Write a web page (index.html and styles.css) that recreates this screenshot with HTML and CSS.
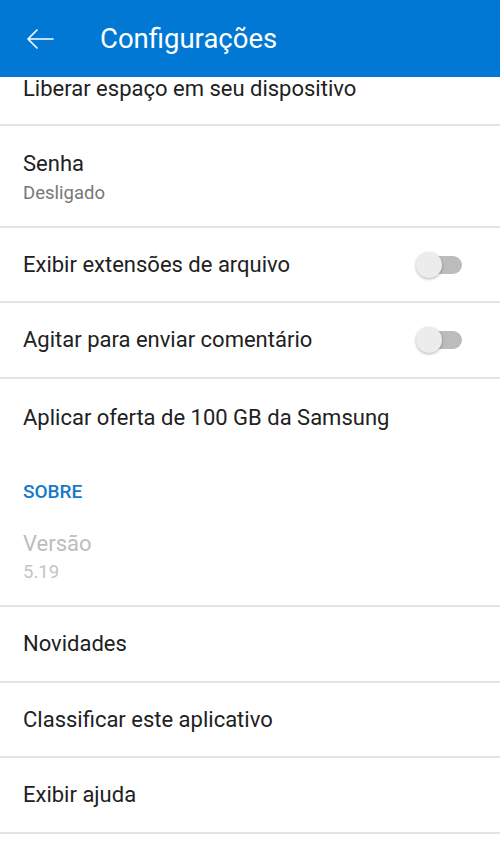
FILE: index.html
```html
<!DOCTYPE html>
<html lang="pt-BR">
<head>
    <meta charset="UTF-8">
    <meta name="viewport" content="width=device-width, initial-scale=1.0">
    <title>Configurações</title>
    <link rel="stylesheet" href="styles.css">
</head>
<body>
    <header class="appbar">
        <svg class="back" width="28" height="20" viewBox="0 0 28 20" aria-hidden="true">
            <path d="M27 10H2M11 1L2 10l9 9" fill="none" stroke="#fff" stroke-width="1.6" stroke-linecap="round" stroke-linejoin="round"/>
        </svg>
        <h1>Configurações</h1>
    </header>

    <main class="list">
        <div class="row row-cut">
            <span class="label">Liberar espaço em seu dispositivo</span>
        </div>
        <div class="row row-double">
            <span class="label">Senha</span>
            <span class="sub">Desligado</span>
        </div>
        <div class="row row-switch row-short">
            <span class="label">Exibir extensões de arquivo</span>
            <span class="switch"><span class="thumb"></span></span>
        </div>
        <div class="row row-switch">
            <span class="label">Agitar para enviar comentário</span>
            <span class="switch"><span class="thumb"></span></span>
        </div>
        <div class="row row-plain">
            <span class="label">Aplicar oferta de 100 GB da Samsung</span>
        </div>

        <div class="section-title">SOBRE</div>
        <div class="row row-version">
            <span class="label muted">Versão</span>
            <span class="sub muted">5.19</span>
        </div>
        <div class="row">
            <span class="label">Novidades</span>
        </div>
        <div class="row row-short">
            <span class="label">Classificar este aplicativo</span>
        </div>
        <div class="row">
            <span class="label">Exibir ajuda</span>
        </div>
    </main>
</body>
</html>
```

FILE: styles.css
```css
body {
    margin: 0;
    font-family: Roboto, 'Noto Sans', sans-serif;
    background-color: #fff;
    color: #212121;
}
.appbar {
    height: 77px;
    background-color: #0078d4;
    display: flex;
    align-items: center;
    padding-left: 26px;
    box-sizing: border-box;
}
.back {
    margin-top: 1px;
}
.appbar h1 {
    margin: 0 0 0 46px;
    font-size: 27.5px;
    font-weight: 400;
    color: #fff;
}
.row {
    height: 76px;
    box-sizing: border-box;
    padding: 0 23px;
    border-bottom: 2px solid #e4e4e4;
    display: flex;
    flex-direction: column;
    justify-content: center;
}
.row-short {
    height: 75px;
}
.label {
    font-size: 22px;
    line-height: 24px;
}
.sub {
    font-size: 18.5px;
    line-height: 22px;
    color: #777;
    margin-top: 6px;
}
.row-cut {
    height: 49px;
    justify-content: flex-start;
}
.row-double {
    height: 102px;
    padding-top: 4px;
}
.row-switch {
    flex-direction: row;
    align-items: center;
    justify-content: space-between;
    padding-right: 38px;
}
.row-plain {
    height: 78px;
    border-bottom: none;
}
.section-title {
    padding: 25px 23px 0;
    height: 75px;
    box-sizing: border-box;
    font-size: 19px;
    line-height: 20px;
    font-weight: 500;
    color: #1479c9;
}
.row-version {
    height: 75px;
    justify-content: flex-start;
}
.row-version .sub {
    margin-top: 5px;
}
.muted {
    color: #bdbdbd;
}
.row-version .sub.muted {
    color: #c4c4c4;
}
.switch {
    position: relative;
    width: 40px;
    height: 18px;
    border-radius: 9px;
    background-color: #bcbcbc;
}
.thumb {
    position: absolute;
    left: -6px;
    top: -4px;
    width: 26px;
    height: 26px;
    border-radius: 50%;
    background-color: #ececec;
    box-shadow: 0 1px 3px rgba(0,0,0,0.3);
}
```
